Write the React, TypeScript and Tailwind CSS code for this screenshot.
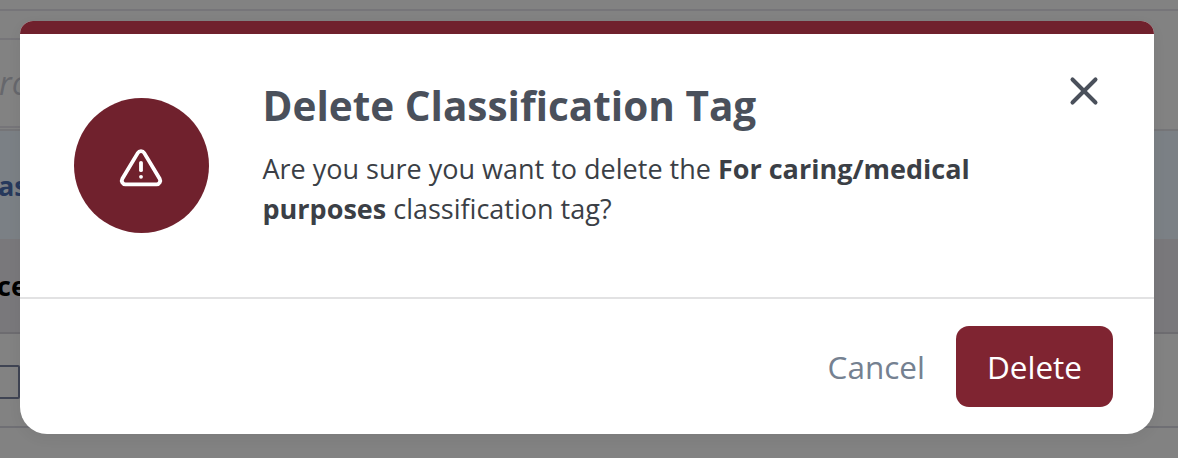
import React from 'react';
import { X } from 'lucide-react';

const AlertTriangle: React.FC<{ className?: string }> = ({ className }) => (
  <svg
    viewBox="0 0 24 24"
    fill="none"
    stroke="currentColor"
    strokeWidth={2}
    strokeLinecap="round"
    strokeLinejoin="round"
    className={className}
  >
    <path d="M12 8.8v3.8" />
    <path d="M10.363 3.591l-8.106 13.534a1.914 1.914 0 0 0 1.636 2.871h16.214a1.914 1.914 0 0 0 1.636 -2.87l-8.106 -13.536a1.914 1.914 0 0 0 -3.274 0z" />
    <path d="M12 16.1h.01" />
  </svg>
);

// Dimmed table that stays visible around the edges of the dialog
const TableBackdrop: React.FC = () => (
  <div className="flex h-full flex-col" aria-hidden="true">
    <div className="h-[11px] shrink-0 border-b-2 border-[#767579]" />
    <div className="h-[120px] shrink-0 border-b-2 border-[#757578] pt-[27px]">
      <div className="flex h-[90px] w-[600px] items-center border-y-2 border-[#767579]">
        <span className="-ml-px text-[32px] text-[#66676c] italic">ro</span>
      </div>
    </div>
    <div className="flex h-[108px] shrink-0 items-center bg-[#7b8085] pt-0.5">
      <span className="-ml-[2px] text-[27px] font-bold text-[#27395c]">as</span>
    </div>
    <div className="flex h-[95px] shrink-0 items-center border-b-2 border-[#6d6c70] bg-[#79787b] pt-0.5">
      <span className="-ml-[3px] text-[27px] font-bold text-black">ce</span>
    </div>
    <div className="flex h-[94px] shrink-0 items-center border-b-2 border-[#6f6f74] pt-1">
      <div className="-ml-[15px] h-[34px] w-[35px] rounded-[2px] border-2 border-[#3f4453]" />
    </div>
    <div className="grow" />
  </div>
);

interface DeleteDialogProps {
  tagName: string;
}

const DeleteDialog: React.FC<DeleteDialogProps> = ({ tagName }) => (
  <div
    role="dialog"
    className="flex h-[413px] w-[1134px] flex-col overflow-hidden rounded-t-[13px] rounded-b-[27px] bg-white shadow-[0_4px_14px_rgba(0,0,0,0.05)]"
  >
    <div className="h-[13px] shrink-0 bg-[#70212d]" />

    <div className="flex h-[265px] shrink-0 items-start border-b-2 border-[#e2e2e3] pl-[54px]">
      <div className="mt-16 flex size-[135px] shrink-0 items-center justify-center rounded-full bg-[#70212d] pt-[7px] pr-px text-white">
        <AlertTriangle className="size-[46px]" />
      </div>
      <div className="mt-[44px] ml-[53.5px] w-[740px]">
        <h2 className="text-[40.5px] leading-[55px] font-bold whitespace-nowrap text-[#4a505b]">
          Delete Classification Tag
        </h2>
        <p className="mt-4 text-[27px] leading-[40px] text-[#3b3f46]">
          Are you sure you want to delete the <strong className="font-bold">{tagName}</strong> classification tag?
        </p>
      </div>
      <button className="mt-[34px] mr-[47px] ml-auto text-[#4a505b]" aria-label="Close">
        <X size={46} strokeWidth={2.1} />
      </button>
    </div>

    <div className="flex grow items-center justify-end gap-[31px] pr-[41px] text-[31.5px]">
      <button className="text-[#758191]">Cancel</button>
      <button className="h-[81px] w-[157px] rounded-[13px] bg-[#7f2431] text-white">Delete</button>
    </div>
  </div>
);

export default function App() {
  return (
    <div className="relative h-[458px] w-[1178px] overflow-hidden bg-[#828282] font-['Open_Sans',sans-serif]">
      <TableBackdrop />
      <div className="absolute inset-0 pt-[21px] pl-5">
        <DeleteDialog tagName="For caring/medical purposes" />
      </div>
    </div>
  );
}
